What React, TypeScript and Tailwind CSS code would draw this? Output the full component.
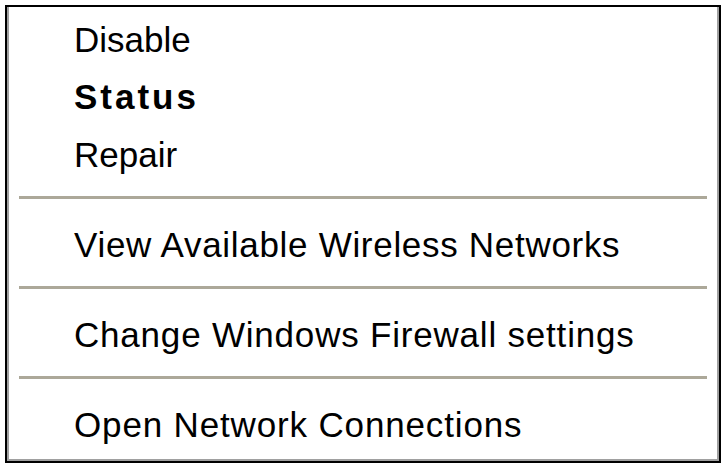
type Item = { label: string; tracking: string; bold?: boolean } | null;

const items: Item[] = [
  { label: "Disable", tracking: "tracking-normal" },
  { label: "Status", tracking: "tracking-[3px]", bold: true },
  { label: "Repair", tracking: "tracking-normal" },
  null,
  { label: "View Available Wireless Networks", tracking: "tracking-[0.7px]" },
  null,
  { label: "Change Windows Firewall settings", tracking: "tracking-[0.8px]" },
  null,
  { label: "Open Network Connections", tracking: "tracking-[0.85px]" },
];

export default function App() {
  return (
    <div className="min-h-screen bg-white pl-[5px] pt-[5px]" style={{ fontFamily: '"Liberation Sans", Arial, sans-serif' }}>
      <div className="w-[716px] border-[2.5px] border-black bg-white">
        <div className="border-x-2 border-b-2 border-[#a0a0a0] pt-[1.5px] pb-[7.5px]">
          {items.map((item, i) =>
            item === null ? (
              <div key={i} className="flex h-[32.7px] items-center px-[10px]">
                <div className="h-[3px] w-full bg-[#aca899]" />
              </div>
            ) : (
              <div
                key={i}
                className={`h-[57.5px] pl-[65px] pt-[4px] text-[35px] leading-[53.5px] text-black ${item.tracking} ${
                  item.bold ? "font-bold" : ""
                }`}
              >
                {item.label}
              </div>
            )
          )}
        </div>
      </div>
    </div>
  );
}
